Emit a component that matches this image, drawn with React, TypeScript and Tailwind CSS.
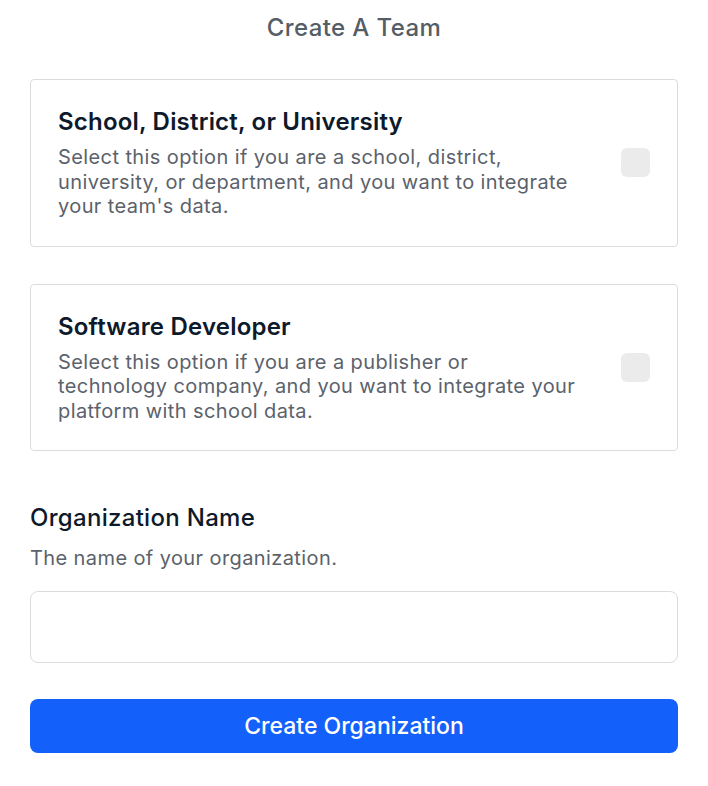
export default function App() {
  const options = [
    {
      title: "School, District, or University",
      desc: "Select this option if you are a school, district, university, or department, and you want to integrate your team's data.",
    },
    {
      title: "Software Developer",
      desc: "Select this option if you are a publisher or technology company, and you want to integrate your platform with school data.",
    },
  ];

  return (
    <div className="min-h-screen bg-white px-[30px] font-['Inter',sans-serif]">
      <h1 className="pt-[13px] text-center text-[24px] leading-[30px] tracking-[0.4px] font-medium text-[#555d66]">
        Create A Team
      </h1>

      <div className="mt-[36px] flex flex-col gap-[37px]">
        {options.map((o) => (
          <label
            key={o.title}
            className="flex items-center justify-between gap-[30px] rounded-[4px] border border-[#dcdcdc] py-[27px] pl-[27px] pr-[27px]"
          >
            <div className="max-w-[522px] flex-1">
              <div className="text-[24px] leading-[30px] tracking-[0.2px] font-semibold text-[#0d1a2b]">
                {o.title}
              </div>
              <p className="mt-[8px] text-[20px] leading-[24.5px] tracking-[0.4px] text-[#5b626b]">
                {o.desc}
              </p>
            </div>
            <span className="h-[29px] w-[29px] shrink-0 rounded-[6px] bg-[#ebebeb]" />
          </label>
        ))}
      </div>

      <div className="mt-[52px] text-[24px] leading-[30px] tracking-[0.3px] font-medium text-[#0d1a2b]">
        Organization Name
      </div>
      <p className="mt-[13px] text-[20px] leading-[24px] tracking-[0.4px] text-[#5b626b]">
        The name of your organization.
      </p>
      <input
        type="text"
        className="mt-[21px] block h-[72px] w-full rounded-[8px] border border-[#dcdcdc] px-4 text-[18px] outline-none"
      />
      <button className="mt-[36px] h-[54px] w-full rounded-[8px] bg-[#1460fa] text-[23px] tracking-[0px] font-medium text-white">
        Create Organization
      </button>
    </div>
  );
}
